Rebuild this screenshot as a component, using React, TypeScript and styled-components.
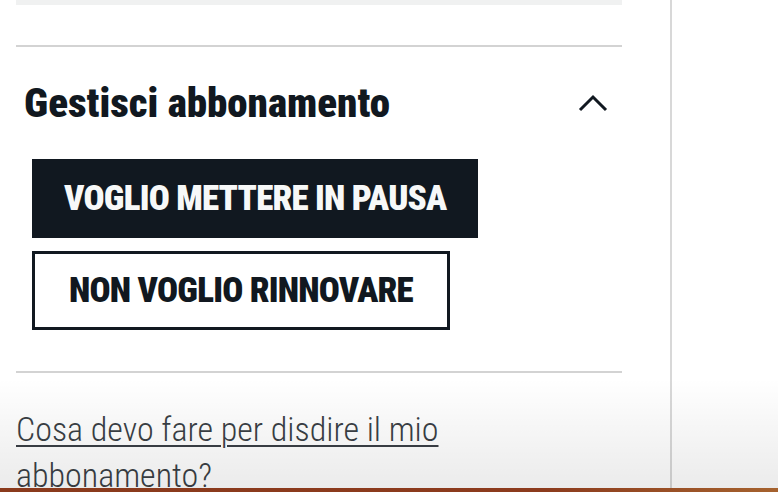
import React from 'react';
import styled, {createGlobalStyle} from 'styled-components';

const GlobalStyle = createGlobalStyle`
    html, body {
        margin: 0;
        padding: 0;
        background: #ffffff;
    }
    body {
        font-family: Roboto, "Open Sans", sans-serif;
        color: #111820;
    }
`;

export default function App() {
    return (
        <>
            <GlobalStyle/>
            <Page>
                <Main>
                    <TopBar/>
                    <Rule $mt='40px'/>
                    <Header>
                        <Title>Gestisci abbonamento</Title>
                        <Toggle aria-label='chiudi'>
                            <svg width='30' height='18' viewBox='0 0 30 18' fill='none'>
                                <polyline points='2,16 15,3 28,16' stroke='#111820' strokeWidth='3'/>
                            </svg>
                        </Toggle>
                    </Header>
                    <Actions>
                        <ActionButton $variant='solid'>VOGLIO METTERE IN PAUSA</ActionButton>
                        <ActionButton $variant='outline'>NON VOGLIO RINNOVARE</ActionButton>
                    </Actions>
                    <Rule $mt='41px'/>
                    <Help>
                        <HelpLink href='#'>Cosa devo fare per disdire il mio abbonamento?</HelpLink>
                    </Help>
                </Main>
                <Aside/>
                <Fade/>
                <Dock/>
            </Page>
        </>
    );
}

const Page = styled.div`
    position: relative;
    display: flex;
    align-items: flex-start;
    height: 492px;
    overflow: hidden;
`;

const Main = styled.main`
    width: 606px;
    padding: 0 48px 0 16px;
    flex-shrink: 0;
`;

const TopBar = styled.div`
    height: 5px;
    background: #f0f1f1;
`;

const Rule = styled.hr<{ $mt: string }>`
    margin: ${p => p.$mt} 0 0;
    border: none;
    height: 2px;
    background: #d3d3d3;
`;

const Header = styled.div`
    height: 112px;
    display: flex;
    align-items: center;
    justify-content: space-between;
    padding: 0 14px 0 8px;
`;

const Title = styled.h2`
    margin: 0;
    font-family: Roboto, "Open Sans", sans-serif;
    font-stretch: 75%;
    font-size: 41px;
    font-weight: 900;
    line-height: 1;
    color: #111820;
`;

const Toggle = styled.button`
    border: none;
    background: none;
    padding: 0;
    display: flex;
    cursor: pointer;
`;

const Actions = styled.div`
    display: flex;
    flex-direction: column;
    align-items: flex-start;
    gap: 13px;
    padding-left: 16px;
`;

const ActionButton = styled.button<{ $variant: 'solid' | 'outline' }>`
    height: 79px;
    font-family: Roboto, "Open Sans", sans-serif;
    font-stretch: 75%;
    font-size: 35px;
    font-weight: 900;
    letter-spacing: -0.8px;
    line-height: 1;
    cursor: pointer;
    border: 3px solid #111820;
    background: ${p => p.$variant === 'solid' ? '#111820' : '#ffffff'};
    color: ${p => p.$variant === 'solid' ? '#f7f8f8' : '#111820'};
    padding: ${p => p.$variant === 'solid' ? '0 29px' : '0 34px'};
`;

const Help = styled.p`
    margin: 33px 0 0;
    font-family: Roboto, "Open Sans", sans-serif;
    font-stretch: 75%;
    font-size: 34px;
    font-weight: 300;
    line-height: 46px;
`;

const HelpLink = styled.a`
    color: #3a3f45;
    text-decoration: underline;
    text-decoration-thickness: 2px;
    text-underline-offset: 4px;
`;

const Aside = styled.aside`
    flex: 1;
    align-self: stretch;
    border-left: 2px solid #d8d8d8;
`;

const Fade = styled.div`
    position: absolute;
    left: 0;
    right: 0;
    bottom: 4px;
    height: 110px;
    background: linear-gradient(rgba(0, 0, 0, 0), rgba(0, 0, 0, 0.08));
    pointer-events: none;
`;

const Dock = styled.div`
    position: absolute;
    left: 0;
    right: 0;
    bottom: 0;
    height: 4px;
    background: linear-gradient(90deg, #8a3a1c 0%, #8c3b1d 70%, #a5622e 100%);
`;
